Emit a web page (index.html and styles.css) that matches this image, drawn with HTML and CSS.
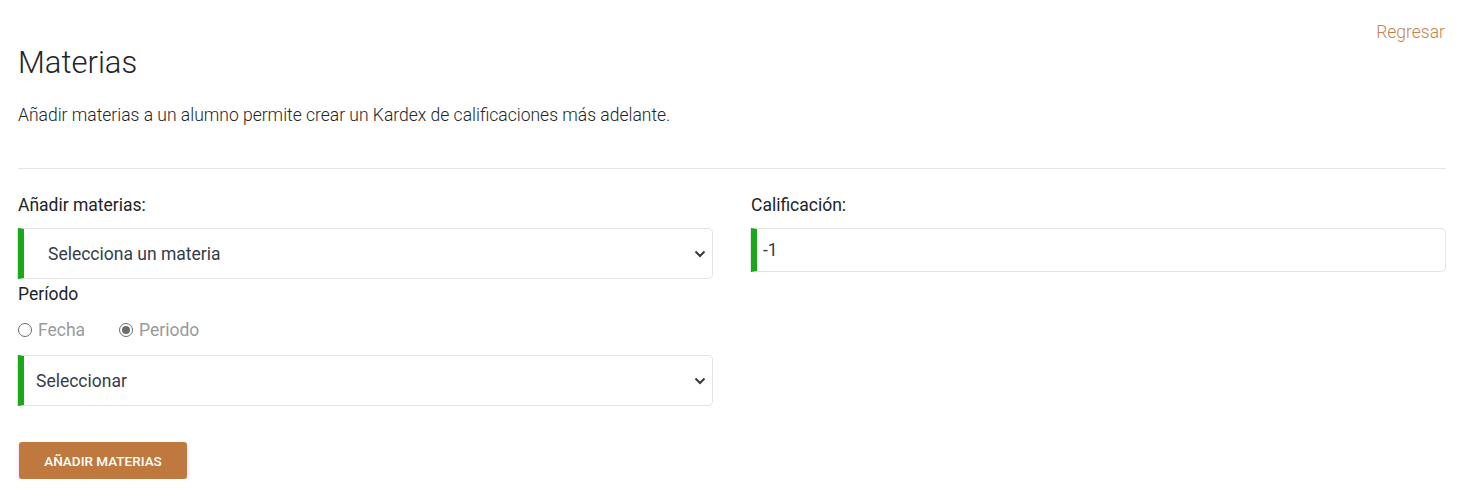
FILE: index.html
```html
<!DOCTYPE html>
<html lang="es">
<head>
<meta charset="utf-8">
<title>Materias</title>
<link rel="stylesheet" href="styles.css">
</head>
<body>
<div class="page">
  <div class="topbar"><a class="back" href="#">Regresar</a></div>
  <h1 class="title">Materias</h1>
  <p class="lead">Añadir materias a un alumno permite crear un Kardex de calificaciones más adelante.</p>
  <hr class="divider">
  <div class="grid">
    <div class="col">
      <label class="label">Añadir materias:</label>
      <div class="select tall indent">
        <span>Selecciona un materia</span>
        <svg class="chev" width="12" height="8" viewBox="0 0 12 8"><path d="M1.5 1.5 L6 6 L10.5 1.5" fill="none" stroke="#343a40" stroke-width="2"/></svg>
      </div>
      <div class="label period">Período</div>
      <div class="radios">
        <label class="radio"><span class="dot"></span>Fecha</label>
        <label class="radio"><span class="dot on"></span>Periodo</label>
      </div>
      <div class="select tall">
        <span>Seleccionar</span>
        <svg class="chev" width="12" height="8" viewBox="0 0 12 8"><path d="M1.5 1.5 L6 6 L10.5 1.5" fill="none" stroke="#343a40" stroke-width="2"/></svg>
      </div>
    </div>
    <div class="col">
      <label class="label">Calificación:</label>
      <div class="input"><span>-1</span></div>
    </div>
  </div>
  <button class="btn">Añadir materias</button>
</div>
</body>
</html>
```

FILE: styles.css
```css
* { box-sizing: border-box; }
html, body { margin: 0; padding: 0; background: #fff; }
body { font-family: Roboto, "Noto Sans", sans-serif; color: #212529; }
.page { padding: 0 22px 0 18px; }
.topbar { display: flex; justify-content: flex-end; padding-top: 20px; height: 43px; }
.back { color: #c7834f; text-decoration: none; font-size: 17.5px; font-weight: 300; line-height: 24px; margin-right: 1px; }
.title { margin: 0; font-size: 31px; font-weight: 300; line-height: 40px; color: #212529; }
.lead { margin: 20px 0 0; font-size: 17.5px; font-weight: 300; line-height: 24px; color: #212529; }
.divider { margin: 41px 0 0; border: 0; border-top: 1px solid #e5e5e5; }
.grid { display: grid; grid-template-columns: 1fr 1fr; column-gap: 38px; margin-top: 24px; }
.col { display: flex; flex-direction: column; }
.label { font-size: 17.5px; line-height: 24px; color: #212529; margin-bottom: 11px; }
.select { position: relative; display: flex; align-items: center; height: 51px; border: 1px solid #e3e3e3; border-left: 6px solid #18a818; border-radius: 0 5px 5px 0; padding-left: 12px; font-size: 17.5px; color: #363d4a; background: #fff; box-shadow: -1px 0 0 #e3e3e3; }
.select.indent { padding-left: 24px; }
.chev { position: absolute; right: 6px; top: 21px; }
.period { margin-top: 3px; margin-bottom: 0; }
.radios { display: flex; gap: 34px; margin-top: 12px; margin-bottom: 13px; height: 24px; align-items: center; }
.radio { display: flex; align-items: center; font-size: 17.5px; color: #9a9a9a; }
.dot { width: 14px; height: 14px; border: 1px solid #6d6d6d; border-radius: 50%; margin-right: 6px; display: inline-block; position: relative; background: #fff; }
.dot.on::after { content: ""; position: absolute; left: 2px; top: 2px; width: 8px; height: 8px; border-radius: 50%; background: #6d6d6d; }
.input { display: flex; align-items: center; height: 44px; border: 1px solid #e3e3e3; border-left: 6px solid #18a818; border-radius: 0 5px 5px 0; padding-left: 6px; font-size: 17.5px; color: #363d4a; box-shadow: -1px 0 0 #e3e3e3; }
.btn { margin: 36px 0 0 1px; width: 168px; height: 37px; border: 0; border-radius: 3px; background: #bf793f; color: #fff; font-family: Roboto, "Noto Sans", sans-serif; font-size: 13.5px; font-weight: 500; text-transform: uppercase; box-shadow: 0 2px 4px rgba(160, 80, 200, 0.25); cursor: pointer; }
```
